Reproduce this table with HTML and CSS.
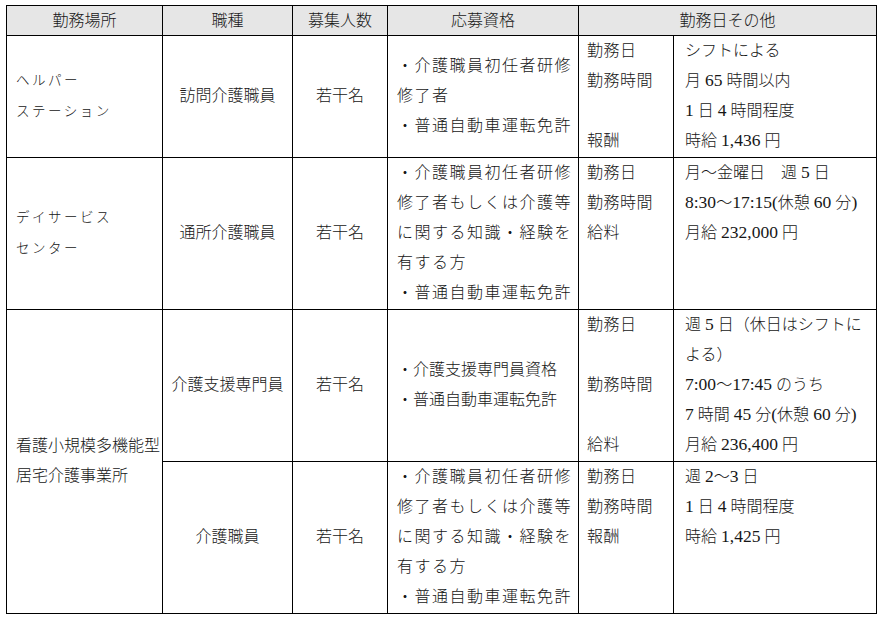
FILE: index.html
```html
<!DOCTYPE html>
<html lang="ja">
<head>
<meta charset="utf-8">
<title>募集要項</title>
<link rel="stylesheet" href="styles.css">
</head>
<body>
<table class="jobs">
  <colgroup>
    <col class="c-place">
    <col class="c-type">
    <col class="c-num">
    <col class="c-qual">
    <col class="c-label">
    <col class="c-value">
  </colgroup>
  <thead>
    <tr>
      <th>勤務場所</th>
      <th>職種</th>
      <th>募集人数</th>
      <th>応募資格</th>
      <th colspan="2">勤務日その他</th>
    </tr>
  </thead>
  <tbody>
    <tr>
      <td class="place"><span class="kana">ヘルパー<br>ステーション</span></td>
      <td class="center">訪問介護職員</td>
      <td class="center">若干名</td>
      <td class="qual just">・介護職員初任者研修<br>修了者<br>・普通自動車運転免許</td>
      <td class="label">勤務日<br>勤務時間<br><br>報酬</td>
      <td class="value">シフトによる<br>月 <span class="num">65</span> 時間以内<br><span class="num">1</span> 日 <span class="num">4</span> 時間程度<br>時給 <span class="num">1,436</span> 円</td>
    </tr>
    <tr>
      <td class="place"><span class="kana">デイサービス<br>センター</span></td>
      <td class="center">通所介護職員</td>
      <td class="center">若干名</td>
      <td class="qual just">・介護職員初任者研修<br>修了者もしくは介護等<br>に関する知識・経験を<br>有する方<br>・普通自動車運転免許</td>
      <td class="label">勤務日<br>勤務時間<br>給料</td>
      <td class="value">月～金曜日　週 <span class="num">5</span> 日<br><span class="num">8:30</span>～<span class="num">17:15(</span>休憩 <span class="num">60</span> 分<span class="num">)</span><br>月給 <span class="num">232,000</span> 円</td>
    </tr>
    <tr>
      <td class="place" rowspan="2">看護小規模多機能型<br>居宅介護事業所</td>
      <td class="center">介護支援専門員</td>
      <td class="center">若干名</td>
      <td class="qual">・介護支援専門員資格<br>・普通自動車運転免許</td>
      <td class="label">勤務日<br><br>勤務時間<br><br>給料</td>
      <td class="value">週 <span class="num">5</span> 日（休日はシフトに<br>よる）<br><span class="num">7:00</span>～<span class="num">17:45</span> のうち<br><span class="num">7</span> 時間 <span class="num">45</span> 分<span class="num">(</span>休憩 <span class="num">60</span> 分<span class="num">)</span><br>月給 <span class="num">236,400</span> 円</td>
    </tr>
    <tr>
      <td class="center">介護職員</td>
      <td class="center">若干名</td>
      <td class="qual just">・介護職員初任者研修<br>修了者もしくは介護等<br>に関する知識・経験を<br>有する方<br>・普通自動車運転免許</td>
      <td class="label">勤務日<br>勤務時間<br>報酬</td>
      <td class="value">週 <span class="num">2</span>～<span class="num">3</span> 日<br><span class="num">1</span> 日 <span class="num">4</span> 時間程度<br>時給 <span class="num">1,425</span> 円</td>
    </tr>
  </tbody>
</table>
</body>
</html>
```

FILE: styles.css
```css
html, body {
  margin: 0;
  padding: 0;
  background: #ffffff;
}

body {
  padding: 5px 0 0 6px;
  font-family: "Liberation Serif", "Noto Sans CJK JP", serif;
  font-size: 16px;
  color: #161616;
}

.jobs {
  border-collapse: collapse;
  table-layout: fixed;
  width: 870px;
}

.c-place { width: 156px; }
.c-type  { width: 130px; }
.c-num   { width: 95px; }
.c-qual  { width: 191px; }
.c-label { width: 95px; }
.c-value { width: 203px; }

.jobs th,
.jobs td {
  border: 1px solid #000;
  padding: 0 0 1px 0;
  line-height: 30px;
  white-space: nowrap;
  font-weight: 300;
  overflow: hidden;
}

.jobs th {
  background: #e6e6e6;
  text-align: center;
  vertical-align: middle;
  line-height: 29px;
  padding: 0;
}

.place {
  vertical-align: middle;
  padding-left: 9px !important;
}

.kana {
  font-size: 13.5px;
  letter-spacing: 2.5px;
  line-height: 30px;
}

.center {
  text-align: center;
  vertical-align: middle;
}

.qual {
  vertical-align: middle;
  padding-left: 9px !important;
}

.just {
  letter-spacing: 1.5px;
}

.label {
  vertical-align: top;
  padding-left: 8px !important;
  letter-spacing: 0.5px;
}

.value {
  vertical-align: top;
  padding-left: 11px !important;
}

.num {
  font-size: 17.5px;
  line-height: 16px;
}
```
